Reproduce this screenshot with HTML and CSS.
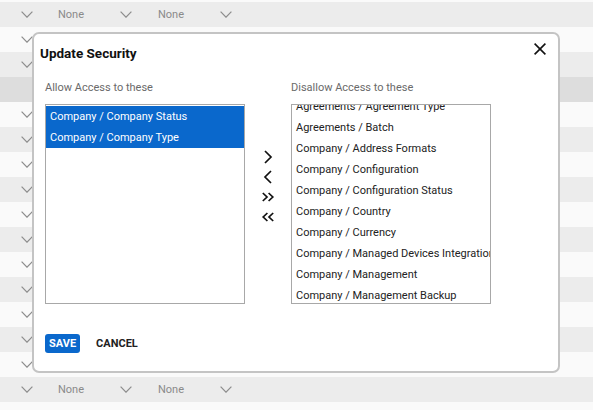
FILE: index.html
```html
<!DOCTYPE html>
<html lang="en">
<head>
<meta charset="utf-8">
<title>Update Security</title>
<link rel="stylesheet" href="styles.css">
</head>
<body>
<div class="table">
  <div class="row gray"><span class="cell first"><svg class="chev" viewBox="0 0 12 7"><polyline points="0.6,0.6 6,6.2 11.4,0.6"/></svg></span><span class="cell"><span class="val">None</span><svg class="chev" viewBox="0 0 12 7"><polyline points="0.6,0.6 6,6.2 11.4,0.6"/></svg></span><span class="cell"><span class="val">None</span><svg class="chev" viewBox="0 0 12 7"><polyline points="0.6,0.6 6,6.2 11.4,0.6"/></svg></span></div>
  <div class="row"><span class="cell first"><svg class="chev" viewBox="0 0 12 7"><polyline points="0.6,0.6 6,6.2 11.4,0.6"/></svg></span></div>
  <div class="row gray"><span class="cell first"><svg class="chev" viewBox="0 0 12 7"><polyline points="0.6,0.6 6,6.2 11.4,0.6"/></svg></span></div>
  <div class="row hover"></div>
  <div class="row"><span class="cell first"><svg class="chev" viewBox="0 0 12 7"><polyline points="0.6,0.6 6,6.2 11.4,0.6"/></svg></span></div>
  <div class="row gray"><span class="cell first"><svg class="chev" viewBox="0 0 12 7"><polyline points="0.6,0.6 6,6.2 11.4,0.6"/></svg></span></div>
  <div class="row"><span class="cell first"><svg class="chev" viewBox="0 0 12 7"><polyline points="0.6,0.6 6,6.2 11.4,0.6"/></svg></span></div>
  <div class="row gray"><span class="cell first"><svg class="chev" viewBox="0 0 12 7"><polyline points="0.6,0.6 6,6.2 11.4,0.6"/></svg></span></div>
  <div class="row"><span class="cell first"><svg class="chev" viewBox="0 0 12 7"><polyline points="0.6,0.6 6,6.2 11.4,0.6"/></svg></span></div>
  <div class="row gray"><span class="cell first"><svg class="chev" viewBox="0 0 12 7"><polyline points="0.6,0.6 6,6.2 11.4,0.6"/></svg></span></div>
  <div class="row"><span class="cell first"><svg class="chev" viewBox="0 0 12 7"><polyline points="0.6,0.6 6,6.2 11.4,0.6"/></svg></span></div>
  <div class="row gray"><span class="cell first"><svg class="chev" viewBox="0 0 12 7"><polyline points="0.6,0.6 6,6.2 11.4,0.6"/></svg></span></div>
  <div class="row"><span class="cell first"><svg class="chev" viewBox="0 0 12 7"><polyline points="0.6,0.6 6,6.2 11.4,0.6"/></svg></span></div>
  <div class="row gray"><span class="cell first"><svg class="chev" viewBox="0 0 12 7"><polyline points="0.6,0.6 6,6.2 11.4,0.6"/></svg></span></div>
  <div class="row"><span class="cell first"><svg class="chev" viewBox="0 0 12 7"><polyline points="0.6,0.6 6,6.2 11.4,0.6"/></svg></span></div>
  <div class="row gray"><span class="cell first"><svg class="chev" viewBox="0 0 12 7"><polyline points="0.6,0.6 6,6.2 11.4,0.6"/></svg></span><span class="cell"><span class="val">None</span><svg class="chev" viewBox="0 0 12 7"><polyline points="0.6,0.6 6,6.2 11.4,0.6"/></svg></span><span class="cell"><span class="val">None</span><svg class="chev" viewBox="0 0 12 7"><polyline points="0.6,0.6 6,6.2 11.4,0.6"/></svg></span></div>
  <div class="row"></div>
</div>

<div class="modal" role="dialog" aria-labelledby="dlg-title">
  <div class="modal-head">
    <h2 class="title" id="dlg-title">Update Security</h2>
    <button class="close" aria-label="Close"><svg viewBox="0 0 12 12"><line x1="0.6" y1="0.6" x2="11.4" y2="11.4"/><line x1="11.4" y1="0.6" x2="0.6" y2="11.4"/></svg></button>
  </div>
  <div class="modal-body">
    <div class="col">
      <div class="label">Allow Access to these</div>
      <div class="list">
        <ul class="items">
          <li class="sel">Company / Company Status</li>
          <li class="sel">Company / Company Type</li>
        </ul>
      </div>
    </div>
    <div class="moves">
      <button class="move" aria-label="Move right"><svg viewBox="0 0 14 14"><polyline points="4,1 10,7 4,13"/></svg></button>
      <button class="move" aria-label="Move left"><svg viewBox="0 0 14 14"><polyline points="10,1 4,7 10,13"/></svg></button>
      <button class="move" aria-label="Move all right"><svg viewBox="0 0 14 14"><polyline points="1.8,3 6,7 1.8,11"/><polyline points="7.6,3 11.8,7 7.6,11"/></svg></button>
      <button class="move" aria-label="Move all left"><svg viewBox="0 0 14 14"><polyline points="6.4,3 2.2,7 6.4,11"/><polyline points="12.2,3 8,7 12.2,11"/></svg></button>
    </div>
    <div class="col">
      <div class="label">Disallow Access to these</div>
      <div class="list">
        <ul class="items scrolled">
          <li>Agreements / Agreement Type</li>
          <li>Agreements / Batch</li>
          <li>Company / Address Formats</li>
          <li>Company / Configuration</li>
          <li>Company / Configuration Status</li>
          <li>Company / Country</li>
          <li>Company / Currency</li>
          <li>Company / Managed Devices Integration</li>
          <li>Company / Management</li>
          <li>Company / Management Backup</li>
        </ul>
      </div>
    </div>
  </div>
  <div class="modal-foot">
    <button class="btn-save">SAVE</button>
    <button class="btn-cancel">CANCEL</button>
  </div>
</div>
</body>
</html>
```

FILE: styles.css
```css
* { box-sizing: border-box; }

html, body {
  margin: 0;
  padding: 0;
}

body {
  width: 593px;
  height: 410px;
  overflow: hidden;
  background: #fafafa;
  font-family: Roboto, "Liberation Sans", Arial, sans-serif;
  font-size: 11px;
  color: #222;
  position: relative;
}

/* background table */
.table {
  padding-top: 2px;
}

.row {
  height: 25px;
  display: grid;
  grid-template-columns: 40px 100px 100px;
  align-items: center;
  background: #fafafa;
}

.row.gray { background: #ececec; }
.row.hover { background: #dddddd; }

.cell {
  display: flex;
  align-items: center;
  justify-content: space-between;
  padding: 0 8px 0 18px;
  height: 25px;
}

.cell.first {
  justify-content: flex-end;
  padding: 0 7px 0 0;
}

.val {
  color: #8a8a8a;
  line-height: 13px;
}

.chev {
  width: 12px;
  height: 7px;
  fill: none;
  stroke: #8c8c8c;
  stroke-width: 1.2;
}

/* modal */
.modal {
  position: absolute;
  left: 32px;
  top: 32px;
  width: 528px;
  height: 341px;
  background: #fff;
  border: 2px solid #c4c4c4;
  border-radius: 7px;
}

.modal-head {
  display: flex;
  justify-content: space-between;
  align-items: flex-start;
  padding: 10px 12px 0 6px;
}

.title {
  margin: 0;
  font-size: 13.5px;
  line-height: 18px;
  font-weight: 700;
  color: #111;
}

.close {
  margin-top: -1px;
  padding: 0;
  border: 0;
  background: none;
  width: 12px;
  height: 12px;
  display: block;
}

.close svg {
  display: block;
  width: 12px;
  height: 12px;
  stroke: #111;
  stroke-width: 1.6;
}

.modal-body {
  display: flex;
  padding: 0 11px;
  margin-top: 19px;
}

.col {
  width: 200px;
  display: flex;
  flex-direction: column;
}

.label {
  line-height: 13px;
  color: #6a6a6a;
  margin-bottom: 10px;
}

.list {
  height: 200px;
  border: 1px solid #a8a8a8;
  padding-top: 1px;
  overflow: hidden;
}

.items {
  list-style: none;
  margin: 0;
  padding: 0;
}

.items.scrolled {
  margin-top: -10px;
}

.items li {
  line-height: 21px;
  height: 21px;
  padding-left: 4px;
  white-space: nowrap;
  color: #222;
}

.items li.sel {
  background: #0a68cc;
  color: #fff;
}

.moves {
  width: 46px;
  display: flex;
  flex-direction: column;
  align-items: center;
  padding-top: 66px;
}

.move {
  width: 14px;
  height: 20px;
  padding: 0;
  border: 0;
  background: none;
  display: flex;
  align-items: center;
  justify-content: center;
}

.move svg {
  width: 14px;
  height: 14px;
  fill: none;
  stroke: #111;
  stroke-width: 1.7;
}

.modal-foot {
  display: flex;
  align-items: center;
  gap: 16px;
  padding: 0 11px;
  margin-top: 30px;
}

.btn-save {
  height: 19px;
  padding: 0 4px;
  border: 0;
  border-radius: 3px;
  background: #0a68cc;
  color: #fff;
  font-family: inherit;
  font-size: 11px;
  font-weight: 700;
  line-height: 19px;
}

.btn-cancel {
  height: 19px;
  padding: 0;
  border: 0;
  background: none;
  color: #222;
  font-family: inherit;
  font-size: 11px;
  font-weight: 700;
  line-height: 19px;
}
```
